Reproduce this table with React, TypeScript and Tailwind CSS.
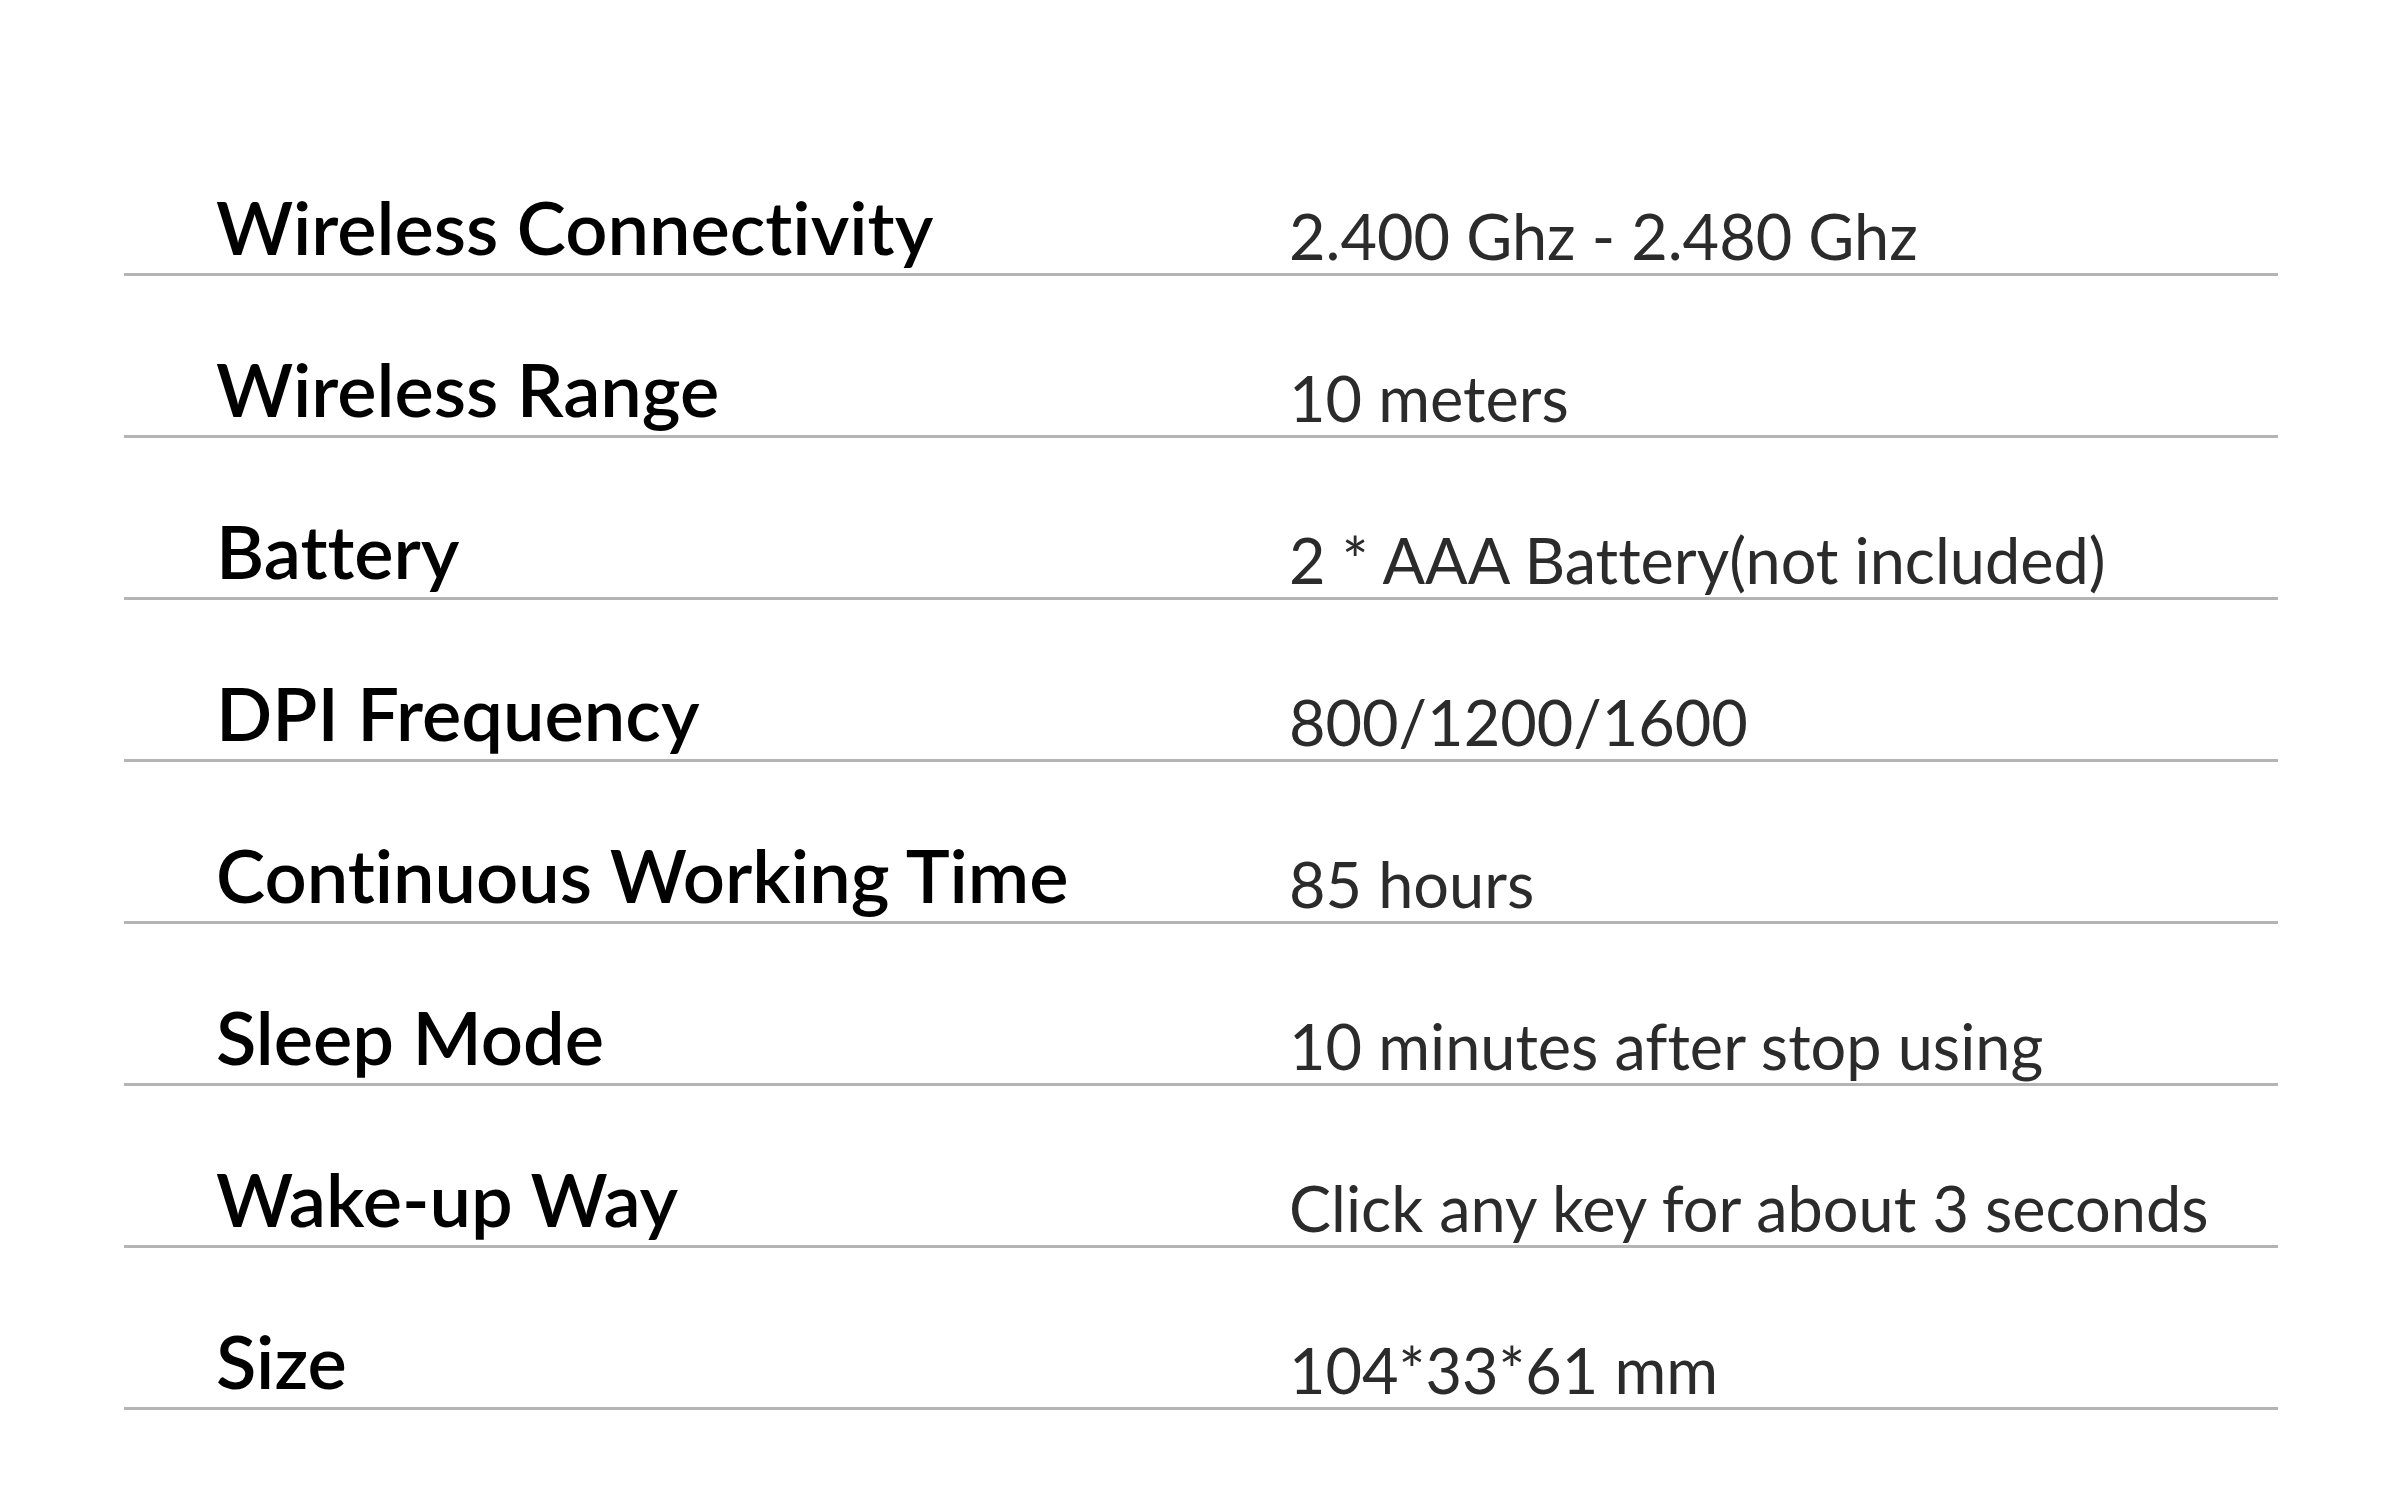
const SPECS: [string, string][] = [
  ["Wireless Connectivity", "2.400 Ghz - 2.480 Ghz"],
  ["Wireless Range", "10 meters"],
  ["Battery", "2 * AAA Battery(not included)"],
  ["DPI Frequency", "800/1200/1600"],
  ["Continuous Working Time", "85 hours"],
  ["Sleep Mode", "10 minutes after stop using"],
  ["Wake-up Way", "Click any key for about 3 seconds"],
  ["Size", "104*33*61 mm"],
];

export default function App() {
  return (
    <div
      className="h-[1496px] w-[2400px] bg-white pt-[114px] [font-variant-ligatures:none]"
      style={{ fontFamily: "Lato, 'Noto Sans', sans-serif" }}
    >
      <div className="ml-[124px] w-[2154px]">
        {SPECS.map(([label, value]) => (
          <div key={label} className="flex h-[162px] items-end border-b-[3px] border-[#b4b4b4] pb-[6px]">
            <div className="mb-[3px] w-[1165px] pl-[92px] text-[74px] font-semibold leading-none text-black">{label}</div>
            <div className="text-[63px] leading-none text-[#2b2b2b]">{value}</div>
          </div>
        ))}
      </div>
    </div>
  );
}
